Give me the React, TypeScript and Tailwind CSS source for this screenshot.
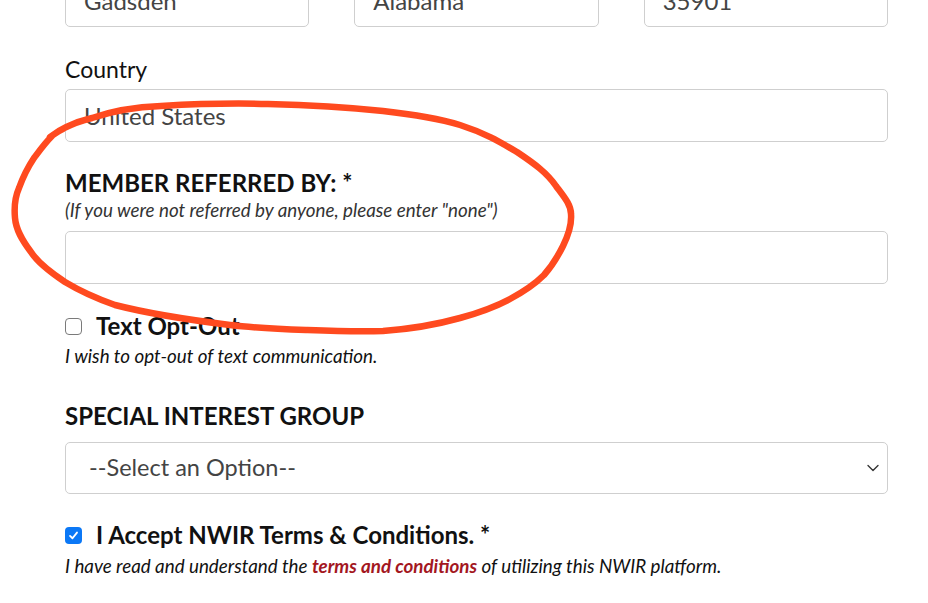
import { ChevronDown } from "lucide-react";

const font = { fontFamily: "Lato, 'Noto Sans', sans-serif" };

function TextBox({ value }: { value?: string }) {
  return (
    <input
      readOnly
      defaultValue={value ?? ""}
      className="w-full h-[53px] rounded-[5px] border border-[#cfcfcf] bg-white px-[18px] text-[24px] text-[#444] outline-none"
    />
  );
}

function CheckBox({ checked }: { checked?: boolean }) {
  if (checked) {
    return (
      <span className="flex h-[17px] w-[17px] shrink-0 items-center justify-center rounded-[4px] bg-[#0b78f6]">
        <svg width="11" height="11" viewBox="0 0 12 12" fill="none">
          <path d="M2.2 6.4 L4.9 9 L9.8 2.8" stroke="#fff" strokeWidth="2" strokeLinecap="round" strokeLinejoin="round" />
        </svg>
      </span>
    );
  }
  return <span className="h-[17px] w-[17px] shrink-0 rounded-[4px] border-[1.5px] border-[#7a7a7a] bg-white" />;
}

export default function App() {
  return (
    <div className="relative h-[603px] w-[928px] overflow-hidden bg-white text-[#111]" style={font}>
      <div className="ml-[65px] w-[823px]">
        {/* City / State / Zip */}
        <div className="-mt-[26px] grid grid-cols-3 gap-[45px]">
          <TextBox value="Gadsden" />
          <TextBox value="Alabama" />
          <TextBox value="35901" />
        </div>

        {/* Country */}
        <div className="mt-[29px] text-[23px] leading-[26px]">Country</div>
        <div className="mt-[7px]">
          <TextBox value="United States" />
        </div>

        {/* Referred by */}
        <div className="mt-[28px] text-[24px] font-bold uppercase leading-[26px]">Member Referred By: *</div>
        <div className="mt-[3px] text-[18.8px] italic leading-[22px] text-[#333]">
          (If you were not referred by anyone, please enter "none")
        </div>
        <div className="mt-[10px]">
          <TextBox />
        </div>

        {/* Text opt-out */}
        <div className="mt-[29px] flex items-center gap-[14px]">
          <CheckBox />
          <span className="text-[24px] font-bold leading-[26px]">Text Opt-Out</span>
        </div>
        <div className="mt-[6px] text-[18.8px] italic leading-[22px]">I wish to opt-out of text communication.</div>

        {/* Special interest group */}
        <div className="mt-[36px] text-[24px] font-bold uppercase leading-[26px]">Special Interest Group</div>
        <div className="relative mt-[13px]">
          <select
            defaultValue=""
            className="h-[52px] w-full appearance-none rounded-[5px] border border-[#cfcfcf] bg-white pl-[23px] text-[23.5px] text-[#444] outline-none"
            style={font}
          >
            <option value="">--Select an Option--</option>
          </select>
          <ChevronDown
            size={20}
            strokeWidth={1.6}
            className="pointer-events-none absolute right-[5px] top-[16px] text-[#333]"
          />
        </div>

        {/* Terms */}
        <div className="mt-[28px] flex items-center gap-[14px]">
          <CheckBox checked />
          <span className="text-[24px] font-bold leading-[26px]">I Accept NWIR Terms &amp; Conditions. *</span>
        </div>
        <div className="mt-[7px] text-[18.8px] italic leading-[22px]">
          I have read and understand the{" "}
          <a className="font-bold text-[#a3171f]">terms and conditions</a> of utilizing this NWIR platform.
        </div>
      </div>

      {/* hand-drawn annotation */}
      <svg className="pointer-events-none absolute left-0 top-0" width="928" height="603" fill="none">
        <path
          d="M50 137 C62 128 75 122 92 118 C115 110 135 107 161 106 C195 104 235 103 268 104 C310 105 345 107 383 111 C410 114 437 118 460 125 C485 133 500 142 517 152 C535 164 547 173 556 186 C565 198 571 205 571 214 C572 226 568 236 563 246 C557 258 552 266 544 275 C533 286 523 292 510 299 C495 307 478 313 460 318 C435 325 410 329 383 331 C357 332 332 331 306 330 C280 329 255 328 230 325 C190 320 150 314 115 305 C95 298 80 291 65 282 C50 272 38 263 31 252 C22 240 16 230 15 218 C14 207 15 197 19 188 C23 177 28 167 34 158 C40 150 45 143 52 136"
          stroke="#ff4a1f"
          strokeWidth="6.5"
          strokeLinecap="round"
          strokeLinejoin="round"
        />
      </svg>
    </div>
  );
}
